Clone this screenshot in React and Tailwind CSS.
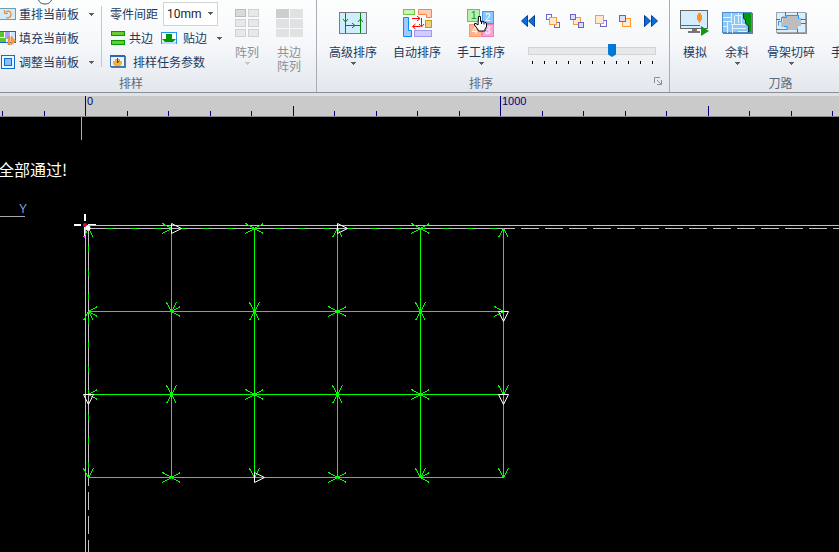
import React, { useState } from 'react';

const CELL = 83;
const COLS = [0, 1, 2, 3, 4, 5];
const ROWS = [0, 1, 2, 3];

// Arrow wings on each side of a node: L, R, U, D
const NODES = [
  ['D', 'L', 'LR', 'D', 'LR', 'D'],
  ['RD', 'UR', 'UD', 'LR', 'UD', 'L'],
  ['R', 'UD', 'LR', 'UD', 'LR', 'U'],
  ['U', 'LR', 'U', 'LR', 'UR', 'U'],
];

const WINGS = {
  L: 'M-9 -5 L0 0 L-9 5',
  R: 'M9 -5 L0 0 L9 5',
  U: 'M-5 -9 L0 0 L5 -9',
  D: 'M-5 9 L0 0 L5 9',
};

// Lead-in markers: column, row, direction
const STARTS = [
  [1, 0, 'right'],
  [3, 0, 'right'],
  [2, 3, 'right'],
  [5, 1, 'down'],
  [0, 2, 'down'],
  [5, 2, 'down'],
];

function Caret({ muted }) {
  return (
    <svg width="5" height="3" viewBox="0 0 5 3" className="shrink-0" aria-hidden="true">
      <path d="M0 0H5V1H4V2H3V3H2V2H1V1H0Z" fill={muted ? '#c3c6ca' : '#5a5d62'} />
    </svg>
  );
}

function RedoIcon() {
  return (
    <svg width="16" height="12" viewBox="0 0 16 12">
      <rect x="-1" y=".5" width="16.5" height="11" fill="#d3ebf8" stroke="#6a9fbe" />
      <path d="M6 9.500C9 10.500 11.500 8.500 11 5.500C10.500 3 7.500 2 5.500 4.500" fill="none" stroke="#f58220" strokeWidth="1.200" />
      <path d="M4.500 2v3.500h3.500" fill="none" stroke="#f58220" />
    </svg>
  );
}

function FillIcon() {
  return (
    <svg width="16" height="14" viewBox="0 0 16 14">
      <rect x="-1" y=".5" width="16.5" height="11" fill="#fff" stroke="#0a6fd0" />
      <path d="M0 1h4v5H0zM0 7h6v4H0z" fill="#5cc42c" />
      <path d="M5 1h5v7H5z" fill="#a6a0ff" />
      <path d="M11 1h4v6h-4z" fill="#cfe5ff" />
      <path d="M8 6v8h2V6zM11 5l5 5-5 4z" fill="#ff9a3c" stroke="#e07a10" strokeWidth=".5" />
    </svg>
  );
}

function AdjustIcon() {
  return (
    <svg width="16" height="14" viewBox="0 0 16 14">
      <rect x="1.500" y=".5" width="13" height="13" fill="#e9f5ff" stroke="#0a6fd0" />
      <rect x="4.5" y="3.5" width="7" height="7" fill="#86bfff" stroke="#0a6fd0" />
    </svg>
  );
}

function SharedEdgeIcon() {
  return (
    <svg width="15" height="14" viewBox="0 0 15 14">
      <rect x="1.500" y=".5" width="13" height="4" fill="#66cc33" stroke="#009900" />
      <rect x="1.500" y="9.500" width="13" height="4" fill="#66cc33" stroke="#009900" />
    </svg>
  );
}

function SnapEdgeIcon() {
  return (
    <svg width="16" height="13" viewBox="0 0 16 13">
      <rect x=".5" y=".5" width="15" height="11" fill="#fff" stroke="#2196f3" />
      <path d="M1 10h14v2H1z" fill="#b8d8ff" />
      <path d="M5 2h6v5h4l-3 3H4L1 7h4z" fill="#009900" />
    </svg>
  );
}

function TaskIcon() {
  return (
    <svg width="17" height="14" viewBox="0 0 17 14">
      <rect x="1" y="1" width="15" height="12" fill="#6d7681" />
      <rect x=".5" y=".5" width="14" height="11" fill="#eaf3fc" stroke="#4173b0" />
      <path d="M0 0h15v2H0z" fill="#2c65b0" />
      <path d="M3 6h2V4h5v2h2v3l-2 2H5L3 9z" fill="#f5b03a" />
      <path d="M7.500 3v5M7.500 7.500l2-1.500" fill="none" stroke="#6b4200" />
    </svg>
  );
}

function ArrayIcon() {
  const cells = [0, 1, 2].flatMap((r) => [0, 1].map((c) => ({ r, c })));
  return (
    <svg width="25" height="28" viewBox="0 0 25 28">
      {cells.map(({ r, c }) => (
        <rect
          key={`${r}-${c}`}
          x={c * 13 + 0.5}
          y={r * 10 + 0.5}
          width="10"
          height="7"
          fill={r + c === 0 ? '#d8dadc' : '#e6e8ea'}
          stroke={r + c === 0 ? '#b9bbbd' : '#cfd1d3'}
        />
      ))}
    </svg>
  );
}

function SharedArrayIcon() {
  const cells = [0, 1, 2].flatMap((r) => [0, 1].map((c) => ({ r, c })));
  return (
    <svg width="27" height="28" viewBox="0 0 27 28">
      {cells.map(({ r, c }) => (
        <rect
          key={`${r}-${c}`}
          x={c * 14}
          y={r * 10}
          width="13"
          height={r === 2 ? 8 : 9}
          fill={r + c === 0 ? '#cdcfcf' : '#dfe1e3'}
        />
      ))}
    </svg>
  );
}

function AdvancedSortIcon() {
  return (
    <svg width="28" height="22" viewBox="0 0 28 22">
      <rect x=".5" y=".5" width="27" height="21" fill="#d0edff" stroke="#7c7c7c" />
      <g fill="none" stroke="#008a00">
        <path d="M6.500 1v20M21.500 1v20M7 13.500h14" />
        <path d="M4 7l2.500 3L9 7M19 10l2.500-3 2.500 3M13 11l3 2.500-3 2.500" />
      </g>
    </svg>
  );
}

function AutoSortIcon() {
  return (
    <svg width="29" height="28" viewBox="0 0 29 28">
      <rect x=".5" y=".5" width="11" height="5" fill="#c8f5b4" stroke="#6cc93c" />
      <path d="M15.500.5h13v8h-5v-3h-8z" fill="#ffcfb8" stroke="#ff7f40" />
      <path d="M.5 8.500h5v13h3v6h-8z" fill="#9dcbff" stroke="#0a8cf5" />
      <rect x="22.5" y="11.5" width="6" height="7" fill="#e9cf80" stroke="#cc9900" />
      <rect x="11.5" y="21.5" width="17" height="6" fill="#d0ccff" stroke="#9f99f2" />
      <g fill="none" stroke="#f00">
        <path d="M9 9.500h8M14 7l3 2.500-3 2.500M18.500 9v8M16 15l2.500 3 2.500-3M17 17.500h-7M12.500 15l-3 2.500 3 2.500" />
      </g>
    </svg>
  );
}

function ManualSortIcon() {
  return (
    <svg width="28" height="30" viewBox="0 0 28 30" fontFamily='"Liberation Sans", sans-serif' fontSize="10">
      <rect x=".5" y="1.500" width="12" height="12" fill="#b9efa8" stroke="#6cc93c" />
      <rect x="15.500" y="3.500" width="11" height="12" fill="#8cc6ff" stroke="#3b9cf5" />
      <rect x="2.500" y="16.500" width="12" height="12" fill="#ffb38c" stroke="#ff9a66" />
      <rect x="15.500" y="16.500" width="11" height="12" fill="#f5a8d6" stroke="#f07cc0" />
      <text x="4" y="11" fill="#159015">1</text>
      <text x="18" y="13" fill="#fff">2</text>
      <text x="5" y="26" fill="#fff">4</text>
      <text x="18" y="26" fill="#fff">3</text>
      <path
        d="M11.500 8.500h2v5l1-.5 1 1 1.500-.5 1 1 1 0 .5 1.500v3l-1.500 2v2h-6.500l-1-2-3-4v-1.500h1.500l2 1.500z"
        fill="#fff"
        stroke="#000"
      />
      <path d="M14.500 13v3M17 14v2.500" stroke="#000" fill="none" />
    </svg>
  );
}

function DoubleArrow({ flip }) {
  return (
    <svg width="14" height="12" viewBox="0 0 14 12" transform={flip ? 'scale(-1 1)' : undefined}>
      <path d="M6.500.5v11L.5 6zM13.500.5v11L7.500 6z" fill="#0a6ee0" stroke="#063f96" />
    </svg>
  );
}

function StackIcon({ kind }) {
  const blue = { fill: '#dcdcff', stroke: '#6a63cf' };
  const orange = { fill: '#ffe9d2', stroke: '#ff9933' };
  return (
    <svg width="15" height="15" viewBox="0 0 15 15">
      {kind === 'front' && (
        <>
          <rect x=".5" y=".5" width="5" height="5" {...blue} fill="#fff" />
          <rect x="8.5" y="8.5" width="5" height="5" {...blue} fill="#fff" />
          <rect x="3.5" y="3.5" width="7" height="7" {...orange} />
        </>
      )}
      {kind === 'back' && (
        <>
          <rect x="3.5" y="3.5" width="7" height="7" {...orange} />
          <rect x=".5" y=".5" width="5" height="5" {...blue} />
          <rect x="8.5" y="8.5" width="5" height="5" {...blue} />
        </>
      )}
      {kind === 'forward' && (
        <>
          <rect x="6.5" y="6.5" width="6" height="6" {...blue} fill="#fff" />
          <rect x="1.5" y="1.5" width="8" height="8" {...orange} />
        </>
      )}
      {kind === 'backward' && (
        <>
          <rect x="4.5" y="4.5" width="8" height="8" {...orange} />
          <rect x="1.5" y="1.5" width="6" height="6" {...blue} />
        </>
      )}
    </svg>
  );
}

function SimulateIcon() {
  return (
    <svg width="30" height="28" viewBox="0 0 30 28">
      <rect x=".5" y="1.500" width="27" height="18" fill="#d3edff" stroke="#666" />
      <path d="M12 20h5v2h3v2H8v-2h4z" fill="#777" />
      <path d="M1 16.500h19" stroke="#1a9a1a" />
      <path d="M18 4h3v2h1v5h-1v1l-1.500 2L18 12v-1h-1V6h1z" fill="#ff9326" />
      <path d="M21 17v10l8-5z" fill="#109a10" />
    </svg>
  );
}

function RemnantIcon() {
  return (
    <svg width="31" height="22" viewBox="0 0 31 22">
      <rect x="1" y="1" width="30" height="21" fill="#7a7a7a" />
      <rect x=".5" y=".5" width="29" height="20" fill="#009a10" stroke="#4e8dc8" />
      <path d="M1 1h20v5l2 2v3l3 3v6H1z" fill="#8fc7f7" />
      <path
        d="M1 5.500h8M9.500 1v10M1 9.500h8M5.500 9v12M1 14.500h4M12.500 4v8M16.500 1v10M19.500 4v9M9 12.500h14M10.500 13v8M10 16.500h14M16 19.500h9M13 3.500h7"
        stroke="#e4f4ff"
        fill="none"
      />
      <path d="M21.500 1v5l2 2v3l3 3v6.500" stroke="#10333f" fill="none" />
    </svg>
  );
}

function SkeletonIcon() {
  return (
    <svg width="31" height="22" viewBox="0 0 31 22">
      <rect x="1" y="1" width="30" height="21" fill="#8a8a8a" />
      <rect x=".5" y=".5" width="29" height="20" fill="#d6efff" stroke="#a0a6aa" />
      <path d="M6 4h16v4h3v6h-3v4H11v-3H5v-5h2z" fill="#bdbdbd" />
      <path d="M22 3.500H10.500v2H5.500v4H2.500v4M22.500 3v4h3M1 17.500h10v-3h-3" fill="none" stroke="#2492ff" />
      <path d="M9.500 0v4M21.500 0v3M0 7.500h4M25 7.500h5M25 11.500h5M0 17.500h3M21.500 17v4" fill="none" stroke="#d84315" />
    </svg>
  );
}

function SmallButton({ icon, label, caret, className = '' }) {
  return (
    <button type="button" className={`flex h-6 items-center whitespace-nowrap ${className}`}>
      <span className="flex w-[19px] shrink-0">{icon}</span>
      {label}
      {caret && (
        <span className="ml-[10px]">
          <Caret />
        </span>
      )}
    </button>
  );
}

function BigButton({ icon, label, caret, disabled, className = '' }) {
  return (
    <button
      type="button"
      disabled={disabled}
      className={`flex shrink-0 flex-col items-center pt-2 leading-[14px] whitespace-nowrap disabled:text-[#8d8f99] ${className}`}
    >
      <span className="mb-[7px] flex h-[30px] items-center justify-center">{icon}</span>
      <span className="whitespace-pre-line">{label}</span>
      {caret && (
        <span className="mt-[3px] flex">
          <Caret muted={disabled} />
        </span>
      )}
    </button>
  );
}

function Group({ title, children, className = '', launcher }) {
  return (
    <section className={`relative shrink-0 border-r border-[#a9adb3] ${className}`} aria-label={title}>
      <div className="flex h-[75px]">{children}</div>
      <h2 className="h-[17px] text-center leading-4 text-[#5f6878]">{title}</h2>
      {launcher && (
        <button type="button" aria-label="排序设置" className="absolute right-[7px] bottom-[7px]">
          <svg width="8" height="8" viewBox="0 0 8 8">
            <path d="M.5 6V.5H6" fill="none" stroke="#8a8f98" />
            <path d="M3 3l4 4M7.500 3v4.500H3" fill="none" stroke="#8a8f98" />
          </svg>
        </button>
      )}
    </section>
  );
}

function OrderControls() {
  const [step, setStep] = useState(67);

  return (
    <div className="flex flex-col pt-3 pl-2">
      <div className="flex h-[18px] w-[137px] items-center justify-between">
        <button type="button" aria-label="最前" className="flex"><DoubleArrow /></button>
        <span className="flex gap-[9px]">
          <button type="button" aria-label="置顶"><StackIcon kind="front" /></button>
          <button type="button" aria-label="置底"><StackIcon kind="back" /></button>
          <button type="button" aria-label="上移"><StackIcon kind="forward" /></button>
          <button type="button" aria-label="下移"><StackIcon kind="backward" /></button>
        </span>
        <button type="button" aria-label="最后" className="flex"><DoubleArrow flip /></button>
      </div>
      <input
        type="range"
        aria-label="排序进度"
        value={step}
        onChange={(e) => setStep(Number(e.target.value))}
        className="mt-[14px] ml-[7px] h-[14px] w-32 appearance-none bg-transparent [&::-webkit-slider-runnable-track]:h-2 [&::-webkit-slider-runnable-track]:border [&::-webkit-slider-runnable-track]:border-[#d2d3d4] [&::-webkit-slider-runnable-track]:bg-[#e7e8e9] [&::-webkit-slider-thumb]:-mt-[4px] [&::-webkit-slider-thumb]:h-[13px] [&::-webkit-slider-thumb]:w-2 [&::-webkit-slider-thumb]:appearance-none [&::-webkit-slider-thumb]:bg-[#0078d7] [&::-webkit-slider-thumb]:[clip-path:polygon(0_0,100%_0,100%_80%,50%_100%,0_80%)]"
      />
      <div className="mt-[3px] ml-[11px] flex w-[121px] justify-between">
        {Array.from({ length: 11 }, (_, i) => (
          <span key={i} className="h-[3px] w-px bg-black" />
        ))}
      </div>
    </div>
  );
}

function Ribbon() {
  return (
    <header className="relative flex overflow-hidden border-b border-[#8b9097] bg-linear-to-b from-[#fdfefe] via-[#f5f7fa] to-[#e3e7ec] text-xs text-[#1e395b]">
      <svg width="14" height="5" viewBox="0 0 14 5" className="absolute top-0 left-[38px]" aria-hidden="true">
        <path d="M.5 0c1 2.500 3 4 6.500 4s5.500-1.500 6.500-4" fill="none" stroke="#4a4f5c" />
      </svg>

      <Group title="排样" className="w-[317px] [&>h2]:pr-[54px]">
        <div className="w-[101px] shrink-0 pt-[2px]">
          <SmallButton icon={<RedoIcon />} label="重排当前板" caret />
          <SmallButton icon={<FillIcon />} label="填充当前板" />
          <SmallButton icon={<AdjustIcon />} label="调整当前板" caret />
        </div>
        <div className="mt-1.5 h-[61px] w-px shrink-0 bg-[#c4c8cd]" />
        <div className="w-[127px] shrink-0 pt-[2px] pl-2">
          <div className="flex h-6 items-center">
            <label htmlFor="part-gap" className="w-[53px] shrink-0">零件间距</label>
            <div className="relative">
              <select
                id="part-gap"
                defaultValue="10mm"
                className="block h-6 w-[55px] appearance-none border border-[#d0d2d5] bg-white pl-[3px] font-[Roboto,sans-serif] text-xs text-[#1e1e1e]"
              >
                <option>5mm</option>
                <option>10mm</option>
                <option>20mm</option>
              </select>
              <span className="pointer-events-none absolute top-[10px] right-[5px] flex">
                <Caret />
              </span>
            </div>
          </div>
          <div className="flex">
            <SmallButton icon={<SharedEdgeIcon />} label="共边" className="w-[51px]" />
            <SmallButton icon={<SnapEdgeIcon />} label="贴边" caret className="[&>span:first-child]:w-[22px]" />
          </div>
          <SmallButton icon={<TaskIcon />} label="排样任务参数" className="[&>span:first-child]:w-[23px]" />
        </div>
        <BigButton icon={<ArrayIcon />} label="阵列" caret disabled className="w-9" />
        <BigButton icon={<SharedArrayIcon />} label={'共边\n阵列'} disabled className="ml-1.5 w-9" />
      </Group>

      <Group title="排序" className="w-[353px] [&>h2]:pr-[24px]" launcher>
        <div className="flex shrink-0 pl-1">
          <BigButton icon={<AdvancedSortIcon />} label="高级排序" caret className="w-16" />
          <BigButton icon={<AutoSortIcon />} label="自动排序" className="w-16" />
          <BigButton icon={<ManualSortIcon />} label="手工排序" caret className="w-16" />
        </div>
        <OrderControls />
      </Group>

      <Group title="刀路" className="w-[222px]">
        <BigButton icon={<SimulateIcon />} label="模拟" className="ml-1.5 w-[38px]" />
        <BigButton icon={<RemnantIcon />} label="余料" caret className="ml-1 w-[38px]" />
        <BigButton icon={<SkeletonIcon />} label="骨架切碎" caret className="ml-[10px] w-[50px]" />
        <BigButton icon={null} label="手" className="ml-[15px]" />
      </Group>
    </header>
  );
}

function Ruler() {
  const ticks = Array.from({ length: 60 }, (_, i) => i - 2);

  return (
    <div className="overflow-hidden border-t-[3px] border-b border-t-[#dfe3e8] border-b-[#8c8c8c] bg-[#cacaca]">
      <svg className="block h-5 w-full" fontFamily='"Liberation Sans", Arial, sans-serif' fontSize="11" fill="#000080">
        {ticks.map((k) => {
          const h = k % 10 === 0 ? 20 : k % 5 === 0 ? 10 : 5;
          return <rect key={k} x={Math.round(85 + k * 41.5)} y={20 - h} width="1" height={h} />;
        })}
        <text x="87" y="9">0</text>
        <text x="502" y="9">1000</text>
      </svg>
    </div>
  );
}

function Canvas() {
  return (
    <main className="relative flex-1 overflow-hidden bg-black">
      <svg className="absolute inset-0 block h-full w-full" fill="none">
        <rect x="81" y="0" width="1" height="23" fill="#a6a6e8" />
        <text x="-2" y="59" fontSize="16" fill="#fff" fontFamily='"Noto Sans CJK SC", sans-serif'>全部通过!</text>
        <text x="19" y="96" fontSize="12" fill="#7aa7dc" fontFamily='"Liberation Sans", sans-serif'>Y</text>
        <rect x="0" y="99" width="25" height="1" fill="#a8a8a8" />

        <g transform="translate(88.5 111.5)" shapeRendering="crispEdges">
          {/* cutting grid */}
          <g stroke="#00ff00">
            {ROWS.map((r) => (
              <path key={r} d={`M0 ${r * CELL}H${5 * CELL}`} />
            ))}
            {COLS.map((c) => (
              <path key={c} d={`M${c * CELL} 0V${3 * CELL}`} />
            ))}
          </g>

          {/* sheet border and trim margin */}
          <g stroke="#c0c0c0">
            <path d="M-3 -3H4000M-3 -3V4000" />
            <path d="M0.500 0H4000M0 -0.500V4000" strokeDasharray="18 6" />
          </g>

          <g stroke="#00ff00">
            {NODES.map((row, r) =>
              row.map((sides, c) => (
                <g key={`${r}-${c}`} transform={`translate(${c * CELL} ${r * CELL})`}>
                  {sides.split('').map((s) => (
                    <path key={s} d={WINGS[s]} strokeLinejoin="bevel" />
                  ))}
                </g>
              ))
            )}
          </g>

          <g stroke="#fff" strokeLinejoin="bevel" shapeRendering="geometricPrecision">
            {STARTS.map(([c, r, dir]) => (
              <path
                key={`${c}-${r}`}
                transform={`translate(${c * CELL} ${r * CELL})`}
                d={dir === 'right' ? 'M0 -5V5L10 0Z' : 'M-5 0H5L0 10Z'}
              />
            ))}
          </g>
        </g>

        {/* machine origin */}
        <g>
          <path d="M84 97h2v7h-2zM74 107h7v2h-7zM88 107h8v1h-8zM84 110h1v10h-1z" fill="#fff" />
          <path d="M84 119h1v2h-1z" fill="#ff00ff" />
          <circle cx="85" cy="108" r="2" fill="#d0103c" />
          <circle cx="88" cy="111" r="2.500" fill="#fff" />
        </g>
      </svg>
    </main>
  );
}

export default function App() {
  return (
    <div className="flex min-h-screen flex-col bg-black font-['Noto_Sans_CJK_SC',sans-serif]">
      <Ribbon />
      <Ruler />
      <Canvas />
    </div>
  );
}
